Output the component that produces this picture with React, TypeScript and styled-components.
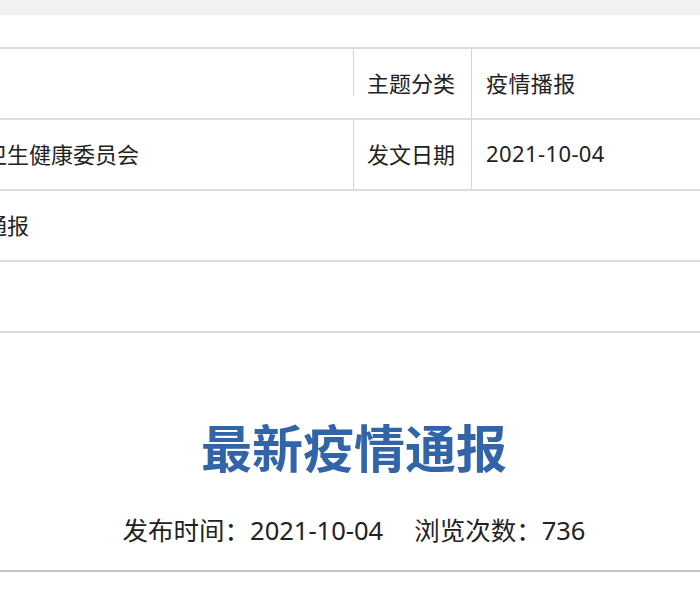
import styled, { createGlobalStyle, css } from 'styled-components';

const GlobalStyle = createGlobalStyle`
    body {
        margin: 0;
        background: #ffffff;
        font-family: "Noto Sans", "Noto Sans CJK SC", sans-serif;
        color: #222222;
    }
`;

type InfoRow = {
    value: string;
    label?: string;
    extra?: string;
}

const rows: InfoRow[] = [
    { value: '', label: '主题分类', extra: '疫情播报' },
    { value: '石家庄市卫生健康委员会', label: '发文日期', extra: '2021-10-04' },
    { value: '最新疫情通报' },
    { value: '' },
];

function App() {
    return (
        <Page>
            <GlobalStyle />
            <TopBar />
            <Article>
                <InfoTable>
                    {rows.map((row, i) => (
                        <Row key={i} $split={!!row.label}>
                            <Cell>{row.value}</Cell>
                            {row.label && <LabelCell $stub={i === 0}>{row.label}</LabelCell>}
                            {row.label && <Cell $tight>{row.extra}</Cell>}
                        </Row>
                    ))}
                </InfoTable>

                <Title>最新疫情通报</Title>
                <Meta>
                    <span>发布时间：2021-10-04</span>
                    <span>浏览次数：736</span>
                </Meta>
            </Article>
        </Page>
    );
}

const Page = styled.div`
    width: 700px;
    height: 600px;
    overflow: hidden;
    background: #ffffff;
`;

const TopBar = styled.div`
    height: 15px;
    background: #f1f1f1;
`;

const Article = styled.article`
    margin: 32px 0 0 -118px;
    width: 944px;
`;

const InfoTable = styled.div`
    border-top: 2px solid #dcdcdc;
`;

const Row = styled.div<{ $split?: boolean }>`
    display: grid;
    grid-template-columns: ${({ $split }) => ($split ? '471px 119px 1fr' : '1fr')};
    height: 71px;
    box-sizing: border-box;
    border-bottom: 2px solid #dcdcdc;
`;

const Cell = styled.div<{ $tight?: boolean }>`
    display: flex;
    align-items: center;
    padding: 0 15px 4px ${({ $tight }) => ($tight ? '14px' : '15px')};
    font-size: 22px;
    letter-spacing: ${({ $tight }) => ($tight ? '0.4px' : '0')};
    white-space: nowrap;
    overflow: hidden;
`;

const LabelCell = styled(Cell)<{ $stub?: boolean }>`
    position: relative;
    overflow: visible;
    padding-left: 13px;
    letter-spacing: 0;
    border-left: 1px solid #d4d4d4;
    border-right: 1px solid #d4d4d4;

    ${({ $stub }) => $stub && css`
        border-left-color: transparent;

        &::before {
            content: '';
            position: absolute;
            left: -1px;
            top: 0;
            width: 1px;
            height: 47px;
            background: #d4d4d4;
        }
    `}
`;

const Title = styled.h1`
    margin: 85px 0 0;
    font-size: 51px;
    font-weight: 700;
    line-height: 60px;
    text-align: center;
    color: #3265a8;
`;

const Meta = styled.div`
    display: flex;
    justify-content: center;
    gap: 31px;
    margin-top: 34px;
    padding-bottom: 22px;
    font-size: 25.5px;
    line-height: 36px;
    color: #222222;
    border-bottom: 2px solid #c6c6c6;
`;

export default App;
